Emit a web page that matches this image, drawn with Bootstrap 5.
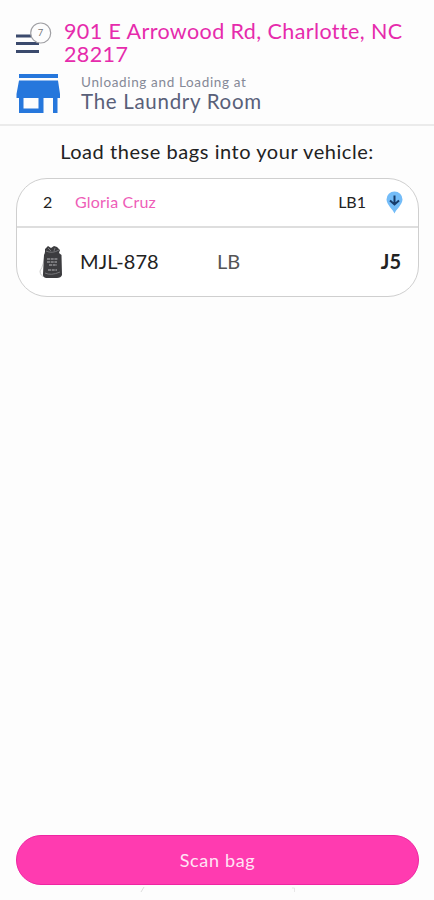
<!DOCTYPE html>
<html lang="en">
<head>
<meta charset="utf-8">
<meta name="viewport" content="width=device-width, initial-scale=1">
<title>Load bags</title>
<link href="https://cdn.jsdelivr.net/npm/bootstrap@5.3.0/dist/css/bootstrap.min.css" rel="stylesheet">
<style>
body{font-family:Lato,"Open Sans",sans-serif;background:#fdfdfd;color:#222;height:900px;overflow:hidden}
.top-bar{height:126px;border-bottom:2px solid #ebebeb;padding:20px 16px 0}
.menu-btn{width:48px;flex:none;padding-top:1px}
.address{font-size:21.5px;line-height:23px;color:#e62bac;letter-spacing:.4px;white-space:nowrap}
.store-row{margin-top:7px}
.store-icon{width:65px;flex:none}
.stop-kind{font-size:13.5px;line-height:18px;color:#858997;letter-spacing:.65px}
.stop-name{font-size:20.5px;line-height:20px;color:#596079;letter-spacing:.7px}
.prompt{font-size:20px;line-height:24px;margin-top:13px;letter-spacing:.55px}
.bag-card{margin:15px 15px 0 16px;height:119px;border:1.5px solid #cfcfcf;border-radius:31px;background:#fff;white-space:nowrap}
.bag-head{height:49px;border-bottom:2px solid #dedede;font-size:16px;padding:0 15px 0 26px}
.bag-line{height:67px;font-size:20px;padding:0 17px 0 22px}
.bag-head>span,.bag-line>.txt{padding-bottom:2px}
.c-num{width:32px}.c-icon{width:41px}.c-code{width:137px;letter-spacing:.1px}
.customer{color:#ee5db8;letter-spacing:.2px}
.bag-type{color:#555}
.scan-btn{margin:0 15px 0 16px;height:50px;border-radius:25px;background:#ff3bb0;border:1px solid #ee25a2;color:#ffe4f5;font-size:18px;letter-spacing:.65px}
.nav-hint{height:15px;padding:2px 138px 0 140px}
</style>
<script src="https://cdn.jsdelivr.net/npm/bootstrap@5.3.0/dist/js/bootstrap.bundle.min.js"></script>
</head>
<body class="d-flex flex-column">
<header class="top-bar">
  <div class="d-flex">
    <div class="menu-btn"><svg class="d-block" width="36" height="34" viewBox="0 0 36 34">
      <g fill="#3b4a6d"><rect y="13.5" width="20" height="3"/><rect y="21" width="23" height="3"/><rect y="29" width="23" height="3"/></g>
      <circle cx="24.7" cy="12" r="10" fill="#fdfdfd" stroke="#a0a0a4" stroke-width="1.2"/>
      <text x="24.5" y="15" font-size="9.5" text-anchor="middle" fill="#777">7</text></svg></div>
    <div class="address">901 E Arrowood Rd, Charlotte, NC<br>28217</div>
  </div>
  <div class="store-row d-flex">
    <div class="store-icon"><svg class="d-block" width="45" height="41" viewBox="0 0 45 41">
      <g fill="#2677dc"><path d="M3 1H42V5H3z"/><path fill-rule="evenodd" d="M3 7.500H42L44 21V25H41.500V40H37V25H27.500V40H3V25H.5V21zM7.500 25V35.500H22.500V25z"/></g></svg></div>
    <div><div class="stop-kind">Unloading and Loading at</div><div class="stop-name">The Laundry Room</div></div>
  </div>
</header>
<main class="flex-grow-1">
  <div class="prompt text-center">Load these bags into your vehicle:</div>
  <section class="bag-card">
    <div class="bag-head d-flex align-items-center">
      <span class="c-num">2</span><span class="customer">Gloria Cruz</span>
      <span class="ms-auto me-3 pe-1">LB1</span>
      <svg width="17" height="23" viewBox="0 0 17 23"><path d="M8.500 22.500C7 18.500 .5 13.500 .5 8.500a8 8 0 0 1 16 0C16.500 13.500 10 18.500 8.500 22.500z" fill="#73bcf8"/><path d="M8.500 4.500V12M4 9.500L8.500 13.500 13 9.500" fill="none" stroke="#173c6b" stroke-width="2"/></svg>
    </div>
    <div class="bag-line d-flex align-items-center">
      <span class="c-icon"><svg class="d-block" width="25" height="34" viewBox="0 0 25 34">
        <path d="M6 7Q5 20 1 26Q1 31 6 32" fill="none" stroke="#ccc"/>
        <path d="M6 4L9 1L12 3L15 1L18 2L21 5L20 8L22.500 10L23 30Q22 33 18 33H7Q3.500 32 4 29L5 10L6 8z" fill="#3c3c3f"/>
        <path d="M7 6Q13 9 20 5M9 3L12 6M16 3L15 6M6 28Q12 31 21 27" fill="none" stroke="#767679"/>
        <path d="M8 14H19M8 17H18M10 20H18M9 25H18" stroke="#8e8e92" stroke-width="1.300" stroke-dasharray="3 .7"/></svg></span>
      <span class="c-code txt">MJL-878</span><span class="bag-type txt">LB</span><strong class="ms-auto txt">J5</strong>
    </div>
  </section>
</main>
<button class="scan-btn btn p-0 flex-shrink-0">Scan bag</button>
<div class="nav-hint d-flex justify-content-between">
  <svg width="5" height="6" viewBox="0 0 5 6"><path d="M4 0L1 5" stroke="#ddd" fill="none"/></svg>
  <svg width="5" height="6" viewBox="0 0 5 6"><path d="M1 1H3.500V5" stroke="#e8e8e8" fill="none"/></svg>
</div>
</body>
</html>
